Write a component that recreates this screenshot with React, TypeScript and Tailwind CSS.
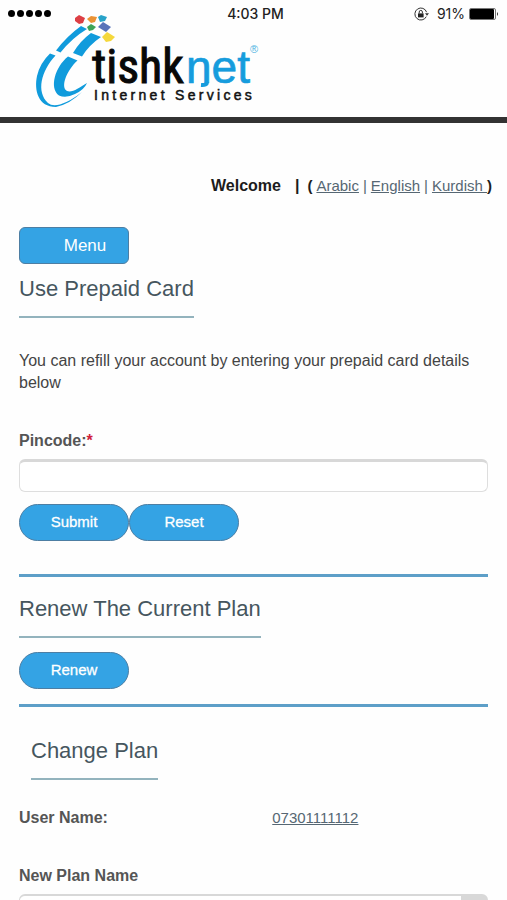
import type { ReactNode } from "react";

const pill =
  "h-[37px] w-[110px] rounded-full border border-[#4d7ea3] bg-[#34a3e4] text-[15px] text-white [-webkit-text-stroke:0.3px_white]";

function StatusBar() {
  return (
    <div className="grid h-[26px] grid-cols-[1fr_auto_1fr] items-center px-2 font-['Inter','Liberation_Sans',sans-serif] text-sm text-[#222]">
      <div className="flex gap-[2px]" aria-label="Signal strength">
        {[0, 1, 2, 3, 4].map((n) => (
          <span key={n} className="size-[7px] rounded-full bg-black" />
        ))}
      </div>
      <span className="pl-1 pt-[2px] font-medium">4:03 PM</span>
      <div className="flex items-center justify-end pt-[2px]">
        <svg className="mr-2 h-[14px] w-[15px]" viewBox="0 0 15 14" fill="none" stroke="#333" aria-hidden="true">
          <path d="M12.3 9.6A6 6 0 1 1 12.6 5.2" />
          <path d="M11 6.2h4l-2 2.6z" fill="#333" stroke="none" />
          <path d="M4 6.4h5.600v4H4z" fill="#222" stroke="none" />
          <path d="M5.2 6.5V5a1.6 1.6 0 0 1 3.200 0v1.500" />
        </svg>
        <span className="mr-1">91%</span>
        <svg className="h-3 w-[30px]" viewBox="0 0 30 12" aria-hidden="true">
          <rect x=".5" y=".5" width="26" height="11" rx="1.5" fill="#fff" stroke="#777" />
          <rect x="1" y="1" width="24" height="10" rx="1" fill="#000" />
          <path d="M28 4q2 2 0 4z" fill="#333" />
        </svg>
      </div>
    </div>
  );
}

function Logo() {
  return (
    <svg
      className="-mt-3 ml-[34px] h-24 w-[228px]"
      viewBox="34 14 228 96"
      role="img"
      aria-label="tishknet Internet Services"
      fontFamily="'Liberation Sans', Arial, sans-serif"
    >
      <g fill="#109bdc">
        <path d="M81 26 87 29Q72 38 60.500 52.500L56 50.500Q67 36 81 26Z" />
        <path d="M50 53.500 55.500 55.500C41 71 36 92 48 103Q52 106.500 60 104.500Q71 101 82 92Q70 104 56 107C38 107 34 90 37 76Q40 63 50 53.500Z" />
        <path d="M91 33 101 37Q89 45 82 56.500L73 53Q80 41 91 33Z" />
        <path d="M68 56.500 77.500 60.500C67 70 60 87 67 91C72 93 79 88 87 83Q84 90 75 94Q66 98.500 59 95.500C49 88 55 67 68 56.500Z" />
      </g>
      <path d="m75 18 4-3 6 3-2 5-4 1-4-3z" fill="#dd3f45" />
      <path d="m87 19 4-3 6 1-2 5-4 1z" fill="#eb9335" />
      <path d="m98 17 3-2 6 2-2 4-5 1z" fill="#28a3c9" />
      <path d="m87 27 4-3 5 3-3 3-4 1z" fill="#3ea457" />
      <path d="m98 27 5-5 8 5-5 5z" fill="#5873b9" />
      <path d="m102 37 5-5 8 5-4 4-5 1z" fill="#f5d83c" />
      <text
        x="92"
        y="83"
        fontSize="48"
        fontFamily="'Roboto Condensed', 'Liberation Sans Narrow', 'Liberation Sans', sans-serif"
        fill="#080808"
        stroke="#080808"
        strokeWidth="1"
      >
        tishk
      </text>
      <text x="186" y="83" fontSize="46" fill="#169cdd" stroke="#169cdd" strokeWidth=".7">
        net
      </text>
      <path d="M207 82Q207 85.500 201 85" fill="none" stroke="#169cdd" strokeWidth="4" />
      <text x="250" y="53" fontSize="11" fill="#4eb4e2">
        ®
      </text>
      <text x="94" y="100" fontSize="14" letterSpacing="3.300" fill="#111" stroke="#111" strokeWidth=".5">
        Internet Services
      </text>
    </svg>
  );
}

function Heading({ children }: { children: ReactNode }) {
  return (
    <h2 className="w-fit border-b-2 border-[#93b3bd] pb-[11px] text-[22px] leading-8 text-[#46565e]">{children}</h2>
  );
}

export default function App() {
  return (
    <div className="min-h-screen bg-[#fefefe] font-['Liberation_Sans',Arial,sans-serif] text-[15px] text-[#444]">
      <header className="border-b-6 border-[#333] pb-[7px]">
        <StatusBar />
        <Logo />
      </header>
      <main className="px-[19px] pt-[52px] pb-8">
        <nav className="-mr-1 flex items-center justify-end leading-[22px] text-[#566773]" aria-label="Language">
          <strong className="mr-3.5 text-base leading-[22px] text-[#1c1c1c]">Welcome</strong>
          <strong className="mr-2 text-base leading-[22px] text-[#1c1c1c]">|</strong>
          <strong className="mr-1 text-[#1c1c1c]">(</strong>
          <a href="#arabic" className="underline">Arabic</a>
          <span className="mx-1">|</span>
          <a href="#english" className="underline">English</a>
          <span className="mx-1">|</span>
          <a href="#kurdish" className="whitespace-pre underline">{"Kurdish "}</a>
          <strong className="text-[#1c1c1c]">)</strong>
        </nav>
        <button
          type="button"
          className="mt-[30px] block h-[37px] w-[110px] rounded-md border border-[#4d7ea3] bg-[#34a3e4] pl-[22px] text-[17px] text-white"
        >
          Menu
        </button>
        <section className="mt-[9px]">
          <Heading>Use Prepaid Card</Heading>
          <p className="mt-8 text-base leading-[22px]">
            You can refill your account by entering your prepaid card details below
          </p>
          <form onSubmit={(e) => e.preventDefault()}>
            <label htmlFor="pincode" className="mt-9 block text-base leading-[22px] font-bold text-[#555]">
              Pincode:<span className="text-[#d0203c]">*</span>
            </label>
            <input
              id="pincode"
              type="text"
              className="mt-[7px] block h-[33px] w-full rounded-md border border-t-3 border-[#dedede] border-t-[#d8d8d8] bg-white px-2 outline-none"
            />
            <div className="mt-3 flex">
              <button type="submit" className={pill}>Submit</button>
              <button type="reset" className={pill}>Reset</button>
            </div>
          </form>
        </section>
        <section className="mt-[33px] border-t-3 border-[#5d9fc8] pt-4">
          <Heading>Renew The Current Plan</Heading>
          <button type="button" className={`${pill} mt-[14px] block`}>Renew</button>
        </section>
        <section className="mt-[15px] border-t-3 border-[#5d9fc8] pt-7">
          <div className="pl-3">
            <Heading>Change Plan</Heading>
          </div>
          <div className="mt-[27px] grid grid-cols-[54fr_46fr] leading-[22px]">
            <span className="text-base leading-[22px] font-bold text-[#555]">User Name:</span>
            <a href="#account" className="w-fit text-[#566773] underline">07301111112</a>
          </div>
          <label htmlFor="plan" className="mt-9 block text-base leading-[22px] font-bold text-[#555]">
            New Plan Name
          </label>
          <select
            id="plan"
            className="mt-[7px] block h-[33px] w-full appearance-none rounded-md border border-t-2 border-[#d8d8d8] bg-white bg-[linear-gradient(#d8d8d8,#d8d8d8)] bg-[length:26px_100%] bg-right bg-no-repeat px-2 outline-none"
          >
            <option value="" />
          </select>
        </section>
      </main>
    </div>
  );
}
